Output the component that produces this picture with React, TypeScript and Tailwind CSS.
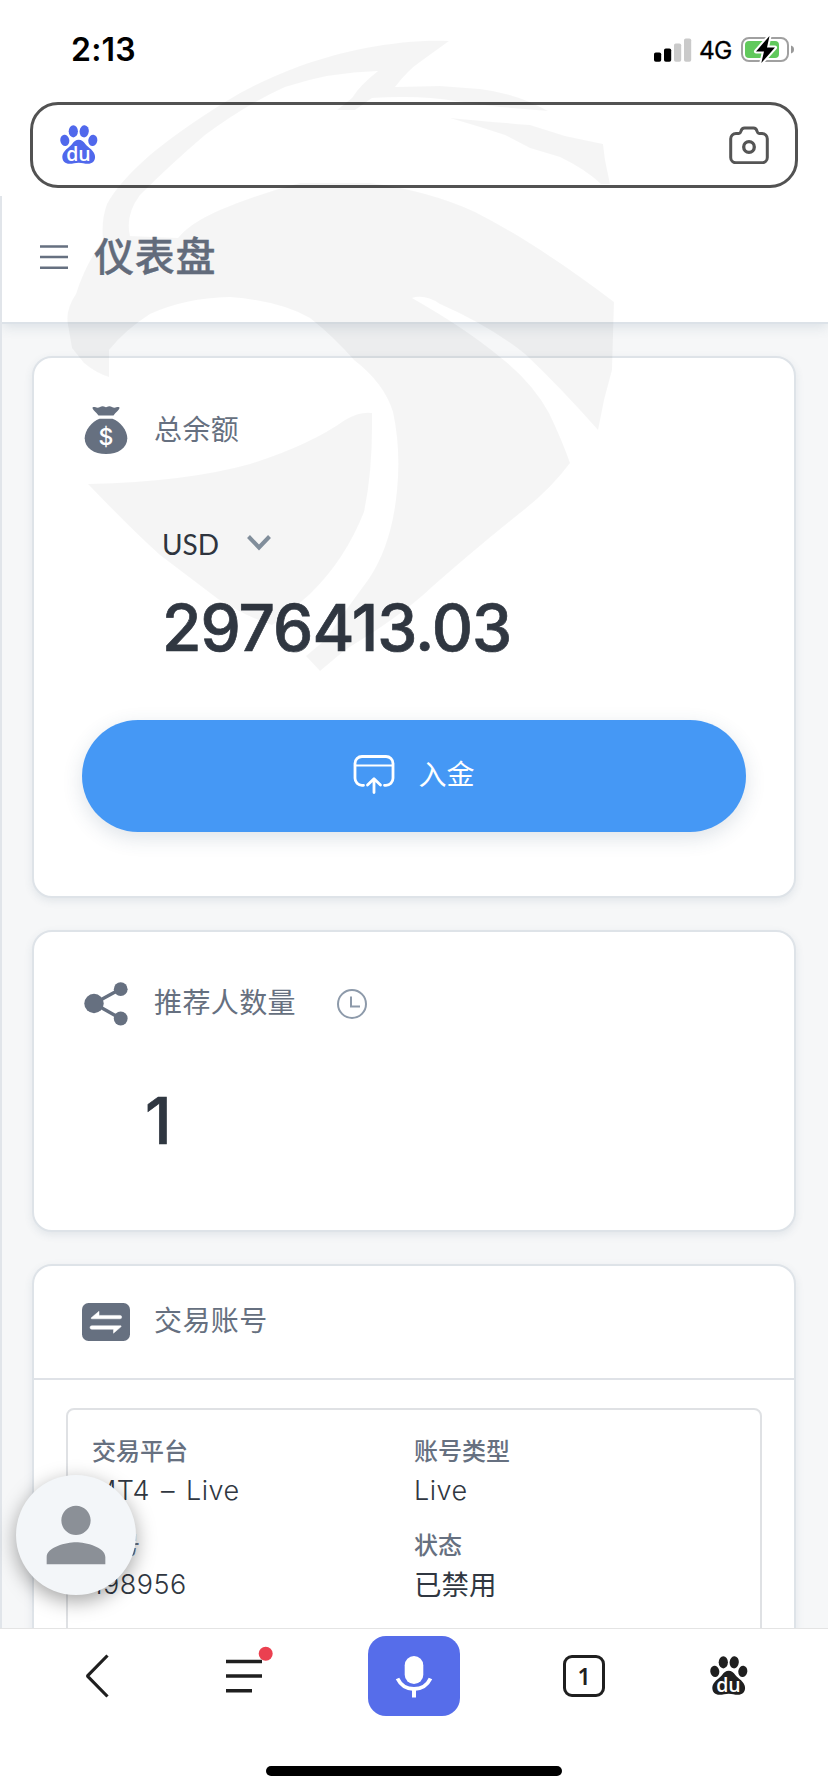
import React from "react";

const latin = "font-['Inter','Noto_Sans_CJK_SC',sans-serif]";
const han = "font-['Noto_Sans_CJK_SC',sans-serif]";

function Paw({ className }: { className: string }) {
  return (
    <svg viewBox="0 0 38 40" className={className} fill="currentColor">
      <ellipse cx="4.8" cy="15.4" rx="4.5" ry="5.7" transform="rotate(-8 4.8 15.4)" />
      <ellipse cx="13.3" cy="6.3" rx="4.6" ry="6.1" />
      <ellipse cx="24.2" cy="6.3" rx="4.6" ry="6.1" transform="rotate(6 24.2 6.3)" />
      <ellipse cx="32.8" cy="15.4" rx="4.5" ry="5.7" transform="rotate(8 32.8 15.4)" />
      <path d="M18.7 14.7c2.9 0 4.9 1.7 6.6 4.2 2.3 3.3 9.8 6.7 9.8 12.9 0 4.4-3 7-7.2 7-3.4 0-5.700-1.100-9.200-1.100s-5.800 1.100-9.200 1.100c-4.200 0-7.200-2.600-7.200-7 0-6.200 7.500-9.600 9.800-12.900 1.700-2.500 3.700-4.200 6.600-4.200Z" />
      <text x="18.4" y="35.800" textAnchor="middle" fill="#fff" fontFamily="Open Sans" fontWeight="600" fontSize="19.500">
        du
      </text>
    </svg>
  );
}

function StatusBar() {
  return (
    <div className="flex h-[102px] items-start justify-between pl-[71px] pr-[33px]">
      <span className={`${latin} mt-[30px] text-[32px] leading-[40px] font-semibold tracking-[0.2px] text-black`}>2:13</span>
      <div className="mt-[34px] flex h-8 items-center">
        <svg viewBox="0 0 38 24" className="h-6 w-[38px]">
          <rect x="0" y="14.500" width="7.200" height="9.200" rx="1.800" fill="#000" />
          <rect x="10" y="10.500" width="7.200" height="13.200" rx="1.800" fill="#000" />
          <rect x="20" y="5.500" width="7.200" height="18.200" rx="1.800" fill="#cacaca" />
          <rect x="30" y="0.500" width="7.200" height="23.200" rx="1.800" fill="#cacaca" />
        </svg>
        <span className={`${latin} ml-[7px] w-[34px] text-[24.500px] leading-8 font-normal tracking-[-0.8px] text-black [-webkit-text-stroke:0.3px_#000]`}>4G</span>
        <svg viewBox="0 0 54 28" className="ml-[8px] h-7 w-[54px]">
          <rect x="1" y="2" width="46" height="23" rx="7" fill="none" stroke="#a0a0a0" strokeWidth="2" />
          <rect x="4" y="5" width="34" height="17" rx="4" fill="#61c95c" />
          <path d="M50 9.500c2.300.6 3 2.300 3 4s-.7 3.400-3 4Z" fill="#999" />
          <path d="M28.500 0 15 15.400h8L20.300 27 34 11.600h-8Z" fill="#000" stroke="#fff" strokeWidth="4" paintOrder="stroke" strokeLinejoin="round" />
        </svg>
      </div>
    </div>
  );
}

function SearchBox() {
  return (
    <div className="mx-[30px] flex h-[86px] items-center justify-between rounded-[28px] border-[3px] border-[#525252] pl-[27px] pr-[26px]">
      <Paw className="h-[40px] w-[38px] text-[#5068ec]" />
      <svg viewBox="0 0 40 38" className="h-[38px] w-[40px]" fill="none" stroke="#555" strokeWidth="3" strokeLinejoin="round">
        <path d="M7 7.500h3c1.500 0 1.500-1 2-2.500.6-2 1.500-3 3.500-3h9c2 0 2.900 1 3.500 3 .5 1.500.5 2.500 2 2.500h3a5.300 5.300 0 0 1 5.300 5.300v18.700a5.300 5.300 0 0 1-5.300 5.300H7a5.300 5.300 0 0 1-5.300-5.300V12.800A5.300 5.300 0 0 1 7 7.500Z" />
        <circle cx="20" cy="21" r="5.300" strokeWidth="3.300" />
      </svg>
    </div>
  );
}

function BagIcon() {
  return (
    <svg viewBox="0 0 48 52" className="h-[52px] w-12" fill="#667080">
      <path d="M10.500 2.500c2-1.200 3 .2 5 .2s3-1.500 5.200-1.500 2 1 3.300 1 1.200-1 3.300-1 3.200 1.500 5.200 1.500 3-1.400 5-.2c.4 2-3.600 4.600-6 7.900H16.500c-2.400-3.300-6.400-5.900-6-7.900Z" />
      <path d="M17.500 13.800h13C38 16.500 45.300 25.500 45.300 33.200 45.300 43 36 49 24 49S2.700 43 2.700 33.200C2.700 25.500 10 16.500 17.500 13.800Z" />
      <text x="24" y="39.500" textAnchor="middle" fill="#fff" fontFamily="Inter" fontWeight="500" fontSize="23">
        $
      </text>
    </svg>
  );
}

function ShareIcon() {
  return (
    <svg viewBox="0 0 48 48" className="h-12 w-12" fill="#667080">
      <path d="M38.500 9 12 23.500 38.500 38.500" fill="none" stroke="#667080" strokeWidth="3.400" />
      <circle cx="12" cy="23.500" r="9.700" />
      <circle cx="38.700" cy="9.200" r="6.900" />
      <circle cx="38.700" cy="38.500" r="6.900" />
    </svg>
  );
}

function TransferIcon() {
  return (
    <svg viewBox="0 0 48 38" className="h-[38px] w-12">
      <rect width="48" height="38" rx="6.500" fill="#667080" />
      <path
        d="M9 15 17 8.300V12.400H38a1.700 1.700 0 0 1 0 3.400H9.500ZM39.200 23.600 31.500 30.200V26.200H9.700a1.700 1.700 0 0 1 0-3.400H39Z"
        fill="#fff"
        stroke="#fff"
        strokeWidth="0.500"
        strokeLinejoin="round"
      />
    </svg>
  );
}

function CardTitle({ icon, children }: { icon: React.ReactNode; children: React.ReactNode }) {
  return (
    <div className="flex items-center">
      {icon}
      <span className={`${han} -mt-[7px] ml-[24px] text-[28px] leading-[40px] tracking-[0.400px] text-[#667080]`}>{children}</span>
    </div>
  );
}

function BalanceCard() {
  return (
    <section className="h-[542px] rounded-[20px] border-2 border-[#dee3e8] bg-white px-12 pt-[47px] shadow-[0_3px_8px_rgba(50,80,110,0.10)]">
      <CardTitle icon={<BagIcon />}>总余额</CardTitle>
      <div className="mt-[67px] flex h-[40px] items-center pl-[80px]">
        <span className="font-['Lato',sans-serif] text-[28px] leading-[40px] text-[#303741]">USD</span>
        <svg viewBox="0 0 24 16" className="-mt-[3px] ml-[28px] h-4 w-6" fill="none" stroke="#8794a2" strokeWidth="4">
          <path d="m1.500 1.500 10.500 11 10.500-11" />
        </svg>
      </div>
      <div className={`${latin} mt-[24px] h-[80px] pl-[80px] text-[64px] leading-[80px] font-medium tracking-[-1px] text-[#303741] [-webkit-text-stroke:0.7px_#303741]`}>
        2976413.03
      </div>
      <button className="mt-[52px] flex h-[112px] w-[664px] items-center justify-center rounded-full bg-[#4598f5] shadow-[0_6px_20px_rgba(50,80,110,0.16)]">
        <svg viewBox="0 0 42 40" className="-mt-[4px] h-10 w-[42px]" fill="none" stroke="#fff" strokeWidth="2.800" strokeLinecap="round" strokeLinejoin="round">
          <path d="M10.500 31.300H9a7 7 0 0 1-7-7V9.500a7 7 0 0 1 7-7h24a7 7 0 0 1 7 7v14.800a7 7 0 0 1-7 7h-1.500" />
          <path d="M2 11.500h38" strokeWidth="2.200" />
          <path d="M21 38.500V25M14.500 31l6.500-6.200 6.500 6.200" />
        </svg>
        <span className={`${han} -mt-[6px] ml-[23px] text-[28px] leading-[40px] text-white`}>入金</span>
      </button>
    </section>
  );
}

function ReferralCard() {
  return (
    <section className="mt-8 h-[302px] rounded-[20px] border-2 border-[#dee3e8] bg-white px-12 pt-[48px] shadow-[0_3px_8px_rgba(50,80,110,0.10)]">
      <div className="flex items-center">
        <CardTitle icon={<ShareIcon />}>推荐人数量</CardTitle>
        <svg viewBox="0 0 32 32" className="ml-[40px] h-8 w-8" fill="none" stroke="#8d9aaa" strokeWidth="2">
          <circle cx="16" cy="16" r="14" />
          <path d="M15 8.500V18.500H24" />
        </svg>
      </div>
      <div className={`${latin} mt-[53px] pl-[63px] text-[64px] leading-[80px] font-medium text-[#303741] [-webkit-text-stroke:0.7px_#303741]`}>1</div>
    </section>
  );
}

function Field({ label, value, valueClass }: { label: string; value: string; valueClass: string }) {
  return (
    <div className="h-[94px]">
      <div className={`${han} text-[24px] leading-[36px] font-medium text-[#667080]`}>{label}</div>
      <div className={`${valueClass} h-10 leading-[40px] text-[#303741]`}>{value}</div>
    </div>
  );
}

const latinValue = "mt-[3px] font-['Inter',sans-serif] text-[27px] font-light tracking-[0.45px] [word-spacing:3px]";
const hanValue = "mt-[1px] font-['Noto_Sans_CJK_SC',sans-serif] text-[27.500px] font-normal";

function AccountsCard() {
  return (
    <section className="mt-8 h-[420px] rounded-t-[20px] border-2 border-[#dee3e8] bg-white shadow-[0_3px_8px_rgba(50,80,110,0.10)]">
      <div className="h-[114px] border-b-2 border-[#dfe2e7] px-12 pt-[37px]">
        <CardTitle icon={<TransferIcon />}>交易账号</CardTitle>
      </div>
      <div className="mx-8 mt-[28px] grid h-[300px] grid-cols-[322px_1fr] content-start rounded-lg border-2 border-[#dfe1e4] pl-[24px] pt-[22px]">
        <Field label="交易平台" value="MT4 – Live" valueClass={latinValue} />
        <Field label="账号类型" value="Live" valueClass={latinValue} />
        <Field label="账号" value="198956" valueClass={latinValue} />
        <Field label="状态" value="已禁用" valueClass={hanValue} />
      </div>
    </section>
  );
}

function BottomBar() {
  return (
    <nav className="flex h-[164px] shrink-0 flex-col border-t border-[#e4e4e4] bg-white">
      <div className="mt-[7px] flex h-[80px] items-center">
        <svg viewBox="0 0 26 46" className="ml-[84px] h-[46px] w-[26px]" fill="none" stroke="#1f1f1f" strokeWidth="3.200">
          <path d="M23.500 2.500 4 22.300q-.7.7 0 1.400L23.500 43.500" />
        </svg>
        <svg viewBox="0 0 50 50" className="ml-[116px] h-[50px] w-[50px] overflow-visible">
          <path d="M0 10.500H36M0 25H36M0 39.700H26" stroke="#1f1f1f" strokeWidth="3.400" />
          <circle cx="39.700" cy="2.700" r="7" fill="#eb4050" />
        </svg>
        <button className="ml-[92px] flex h-[80px] w-[92px] items-center justify-center rounded-[18px] bg-[#566dea]">
          <svg viewBox="0 0 40 44" className="h-11 w-10" fill="none" stroke="#fff">
            <rect x="10.700" y="2" width="18.600" height="28" rx="9.300" fill="#fff" stroke="none" />
            <path d="M3.500 24.500c3 6.300 9 10.500 16.500 10.500s13.500-4.200 16.500-10.500" strokeWidth="3.800" />
            <path d="M20 35v8.500" strokeWidth="4" />
          </svg>
        </button>
        <span className="ml-[103px] flex h-[42px] w-[42px] items-center justify-center rounded-[9px] border-[3px] border-[#1f1f1f] font-['Noto_Sans',sans-serif] text-[23px] leading-none font-semibold text-[#1f1f1f]">
          1
        </span>
        <Paw className="ml-[105px] h-[40px] w-[38px] text-[#1f1f1f]" />
      </div>
      <div className="mx-auto mt-[50px] h-[10px] w-[296px] rounded-full bg-black" />
    </nav>
  );
}

function Watermark() {
  return (
    <svg viewBox="0 0 828 1792" className="pointer-events-none absolute inset-0 h-full w-full" fill="#000" fillOpacity="0.04">
      <path d="M449 41C400 39 345 50 300 66Q255 83 225 102Q180 130 150 155Q118 183 107 204Q101 220 103 240Q85 265 76 294Q65 310 68 325L72 348L84 363Q96 373 109 377L109 350Q125 330 150 314Q185 298 230 297Q280 301 310 318Q334 337 354 360Q384 383 393 412Q401 450 397 490Q392 545 368 580Q345 611 325 640L306 656L320 671L345 650L372 633Q410 608 433 586Q480 545 520 513Q550 490 570 463Q562 440 549 413Q532 382 500 357Q465 328 412 298Q425 294 440 304Q490 326 525 354Q560 387 598 430L604 400L612 370L614 302C565 265 520 235 475 212Q430 191 370 183L300 183Q255 195 220 210Q190 223 178 238L130 236Q125 215 140 195Q170 165 205 135Q245 105 285 87Q330 72 378 71Q360 85 352 98L337 110L355 110L372 98Q420 95 455 101L500 107L548 111Q515 93 480 89L440 86L395 87Q408 70 420 62Z" />
      <path d="M450 118Q480 121 530 125L565 136L603 144L605 160L610 184H601Q585 169 560 157L530 148L505 135L480 127Z" />
      <path d="M88 484Q185 482 250 464Q310 445 345 420Q360 411 372 413Q373 470 364 512Q345 560 310 594L280 620L272 625Q245 616 218 599L160 555Q130 528 88 484Z" />
    </svg>
  );
}

export default function App() {
  return (
    <div className="relative flex h-[1792px] w-[828px] flex-col overflow-hidden bg-white">
      <header className="h-[196px] shrink-0">
        <StatusBar />
        <SearchBox />
      </header>
      <main className="flex h-[1432px] shrink-0 flex-col overflow-hidden border-l-2 border-[#e1e5ea] bg-[#f6f7f8]">
        <div className="relative flex h-[128px] shrink-0 items-center border-b-2 border-[#dce2e8] bg-white pb-1 pl-[38px] shadow-[0_3px_12px_rgba(60,90,120,0.14)]">
          <svg viewBox="0 0 28 26" className="h-[26px] w-7" stroke="#667080" strokeWidth="2.600">
            <path d="M0 2.500H28M0 13H28M0 23.700H28" />
          </svg>
          <h1 className={`${han} -mt-[7px] ml-[26px] text-[40px] leading-[56px] font-medium tracking-[0.8px] text-[#667080] [-webkit-text-stroke:0.4px_#667080]`}>仪表盘</h1>
        </div>
        <div className="px-[32px] pt-[32px] pl-[30px]">
          <BalanceCard />
          <ReferralCard />
          <AccountsCard />
        </div>
      </main>
      <BottomBar />
      <Watermark />
      <div className="absolute top-[1475px] left-[16px] flex h-[120px] w-[120px] items-center justify-center rounded-full bg-[#f3f6f9] shadow-[0_6px_20px_rgba(0,0,0,0.36)]">
        <svg viewBox="0 0 24 24" className="h-[88px] w-[88px]" fill="#8b9097">
          <path d="M12 12c2.210 0 4-1.790 4-4s-1.790-4-4-4-4 1.790-4 4 1.790 4 4 4zm0 2c-2.670 0-8 1.340-8 4v2h16v-2c0-2.660-5.330-4-8-4z" />
        </svg>
      </div>
    </div>
  );
}
